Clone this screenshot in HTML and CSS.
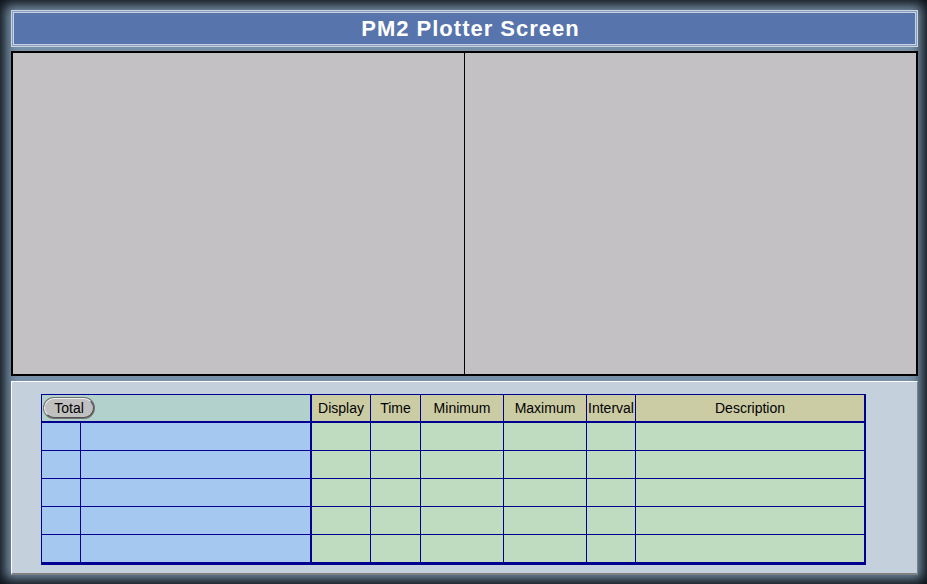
FILE: index.html
```html
<!DOCTYPE html>
<html lang="en">
<head>
    <meta charset="UTF-8">
    <meta name="viewport" content="width=device-width, initial-scale=1.0">
    <title>PM2 Plotter Screen</title>
    <link rel="stylesheet" href="styles.css">
</head>
<body>
    <div class="screen">
        <h1 class="title">PM2 Plotter Screen</h1>
        <div class="plots">
            <div class="plot"></div>
            <div class="plot"></div>
        </div>
        <div class="panel">
            <div class="grid">
                <div class="cell head-name"><button class="total">Total</button></div>
                <div class="cell head split">Display</div>
                <div class="cell head">Time</div>
                <div class="cell head">Minimum</div>
                <div class="cell head">Maximum</div>
                <div class="cell head">Interval</div>
                <div class="cell head">Description</div>
            </div>
            <div class="grid body" id="rows"></div>
        </div>
    </div>
    <script>
        const rows = document.getElementById('rows');
        for (let i = 0; i < 5; i++) {
            for (let c = 0; c < 8; c++) {
                let d = document.createElement('div');
                d.className = 'cell ' + (c < 2 ? 'name' : 'val') + (c == 2 ? ' split' : '');
                rows.appendChild(d);
            }
        }
    </script>
</body>
</html>
```

FILE: styles.css
```css
* {
    margin: 0;
    padding: 0;
    box-sizing: border-box;
}

body {
    font-family: "Liberation Sans", Arial, sans-serif;
    background: #101820;
}

.screen {
    width: 927px;
    height: 584px;
    padding: 10px 9px 9px 11px;
    display: flex;
    flex-direction: column;
    background: #7890a8;
    box-shadow: inset 0 0 12px 5px #0c1218;
}

.title {
    height: 37px;
    background: #5774ad;
    border: 1px solid #c8d4e4;
    box-shadow: inset 0 0 0 1px #8a9cbc, inset 0 0 0 2px #c8d4e4;
    color: #fff;
    font-size: 22px;
    font-weight: bold;
    letter-spacing: 1px;
    text-align: center;
    line-height: 35px;
    padding-left: 12px;
}

.plots {
    margin-top: 4px;
    height: 325px;
    display: grid;
    grid-template-columns: 451px 451px;
    gap: 1px;
    background: #000;
    border: 2px solid #000;
}

.plot {
    background: #c4c1c4;
}

.panel {
    margin-top: 5px;
    height: 194px;
    background: #c4d0dc;
    border-top: 1px solid #fff;
    border-left: 1px solid #fff;
    border-right: 1px solid #808080;
    border-bottom: 2px solid #808080;
    padding: 12px 0 0 29px;
}

.grid {
    width: 825px;
    display: grid;
    grid-template-columns: 38px 229px 59px 49px 82px 82px 48px 228px;
    gap: 1px;
    background: #000090;
    padding: 1px 2px 0 1px;
}

.grid.body {
    grid-auto-rows: 27px;
    padding: 2px 2px 3px 1px;
}

.cell {
    font-size: 14px;
    text-align: center;
    line-height: 26px;
}

.split {
    margin-left: 1px;
}

.head-name {
    grid-column: span 2;
    height: 26px;
    background: #b2d0cc;
    padding-left: 2px;
    display: flex;
    align-items: center;
}

.head {
    background: #cccca4;
}

.name {
    background: #a4c8f0;
}

.val {
    background: #c0dcc0;
}

.total {
    width: 50px;
    height: 20px;
    border-radius: 10px;
    background: #c0c0c0;
    border: 1px solid #505050;
    border-top-color: #f0f0f0;
    border-left-color: #f0f0f0;
    box-shadow: 0 0 0 1px #707070;
    font-family: "Liberation Sans", Arial, sans-serif;
    font-size: 14px;
    line-height: 17px;
    color: #000;
}
```
